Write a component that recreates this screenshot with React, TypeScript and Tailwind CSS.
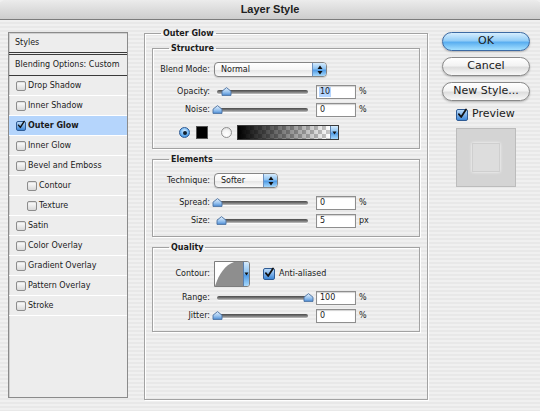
import React from "react";

function Check({ checked = false, big = false }: { checked?: boolean; big?: boolean }) {
  const size = big ? "w-[12px] h-[12px]" : "w-[10px] h-[10px]";
  if (!checked) {
    return (
      <div
        className={`${size} shrink-0 rounded-[2px] border border-[#8d8d8d] bg-gradient-to-b from-white to-[#d9d9d9] shadow-[inset_0_1px_1px_rgba(0,0,0,0.12)]`}
      />
    );
  }
  return (
    <div
      className={`${size} relative shrink-0 rounded-[2px] border border-[#2f5b94] bg-gradient-to-b from-[#b8d9f8] to-[#3c87d8]`}
    >
      <svg viewBox="0 0 12 12" className="absolute left-[0px] top-[-2px] w-full h-[calc(100%+2px)] overflow-visible">
        <path d="M2.2 6.2 L5 9.6 L10.8 0.6" fill="none" stroke="#111" strokeWidth="2.1" strokeLinejoin="round" strokeLinecap="round" />
      </svg>
    </div>
  );
}

function Radio({ on = false }: { on?: boolean }) {
  if (on) {
    return (
      <div className="w-[11px] h-[11px] shrink-0 rounded-full border border-[#2d5a94] bg-[radial-gradient(circle_at_50%_35%,#d9eeff_0%,#6cb3f2_55%,#2f7fd4_100%)] flex items-center justify-center">
        <div className="w-[4px] h-[4px] rounded-full bg-[#102030]" />
      </div>
    );
  }
  return (
    <div className="w-[11px] h-[11px] shrink-0 rounded-full border border-[#8f8f8f] bg-[radial-gradient(circle_at_50%_70%,#ffffff_0%,#f4f4f4_50%,#d2d2d2_100%)]" />
  );
}

function Slider({ pct }: { pct: number }) {
  const left = 3 + (pct / 100) * 91 - 5.5;
  return (
    <div className="relative w-[97px] h-[14px] flex items-center shrink-0">
      <div className="mx-[3px] flex-1 h-[4px] rounded-full bg-gradient-to-b from-[#4b4b4b] via-[#777777] to-[#c4c4c4] shadow-[0_1px_0_rgba(255,255,255,0.8)]" />
      <svg
        viewBox="0 0 11 9"
        className="absolute top-[2px] w-[11px] h-[9px]"
        style={{ left: `${left}px` }}
      >
        <defs>
          <linearGradient id={`tg${pct}`} x1="0" y1="0" x2="0" y2="1">
            <stop offset="0" stopColor="#e4f0fd" />
            <stop offset="0.55" stopColor="#9cc5ef" />
            <stop offset="1" stopColor="#4f90d8" />
          </linearGradient>
        </defs>
        <path d="M1 4.2 L5.5 0.6 L10 4.2 L10 8.4 L1 8.4 Z" fill={`url(#tg${pct})`} stroke="#4a6f9f" strokeWidth="0.9" strokeLinejoin="round" />
      </svg>
    </div>
  );
}

function NumInput({ value, selected = false }: { value: string; selected?: boolean }) {
  return (
    <div className="ml-[5px] w-[40px] h-[14px] shrink-0 border border-[#8e8e8e] bg-white shadow-[inset_0_1px_1px_rgba(0,0,0,0.18)] flex items-center pl-[2px]">
      <span className={selected ? "bg-[#b5d5ff] px-[1px] leading-[10px]" : "px-[1px] leading-[10px]"}>{value}</span>
    </div>
  );
}

function Arrows() {
  return (
    <svg viewBox="0 0 6 10" className="w-[6px] h-[10px]">
      <path d="M3 0.5 L5.5 4 L0.5 4 Z" fill="#111" />
      <path d="M3 9.5 L5.5 6 L0.5 6 Z" fill="#111" />
    </svg>
  );
}

function Down() {
  return (
    <svg viewBox="0 0 6 5" className="w-[5px] h-[4px]">
      <path d="M0.5 0.5 L5.5 0.5 L3 4.5 Z" fill="#111" />
    </svg>
  );
}

function Popup({ label, wide }: { label: string; wide: boolean }) {
  return (
    <div
      className={`${wide ? "w-[113px]" : "w-[64px]"} ml-[4px] h-[15px] shrink-0 flex rounded-[4px] border border-[#858585] overflow-hidden bg-[linear-gradient(180deg,#ffffff_0%,#f6f6f6_50%,#e6e6e6_55%,#fbfbfb_100%)] shadow-[0_1px_1px_rgba(0,0,0,0.15)]`}
    >
      <div className="flex-1 flex items-center pl-[6px]">{label}</div>
      <div className="w-[14px] border-l border-[#6b8fbf] flex items-center justify-center bg-[linear-gradient(180deg,#d6ebfc_0%,#8cc3f3_45%,#4f9be6_55%,#a6d8fb_100%)]">
        <Arrows />
      </div>
    </div>
  );
}

function Group({ title, children }: { title: string; children: React.ReactNode }) {
  return (
    <fieldset className="mx-[7px] border border-[#a2a2a2] shadow-[1px_1px_0_#ffffff,inset_1px_1px_0_#ffffff]">
      <legend className="ml-[16px] px-[2px] font-bold leading-[11px] text-[8px]">{title}</legend>
      <div className="flex flex-col pt-[8px] pb-[8px]">{children}</div>
    </fieldset>
  );
}

function Label({ text }: { text: string }) {
  return <div className="w-[57px] shrink-0 text-right">{text}</div>;
}

function SliderRow({ label, pct, value, unit, selected = false, top }: { label: string; pct: number; value: string; unit: string; selected?: boolean; top: string }) {
  return (
    <div className={`${top} h-[14px] flex items-center`}>
      <Label text={label} />
      <div className="ml-[4px]" />
      <Slider pct={pct} />
      <NumInput value={value} selected={selected} />
      <div className="ml-[3px]">{unit}</div>
    </div>
  );
}

const items: { name: string; indent?: boolean; on?: boolean }[] = [
  { name: "Drop Shadow" },
  { name: "Inner Shadow" },
  { name: "Outer Glow", on: true },
  { name: "Inner Glow" },
  { name: "Bevel and Emboss" },
  { name: "Contour", indent: true },
  { name: "Texture", indent: true },
  { name: "Satin" },
  { name: "Color Overlay" },
  { name: "Gradient Overlay" },
  { name: "Pattern Overlay" },
  { name: "Stroke" },
];

function Button({ label, primary = false, top }: { label: string; primary?: boolean; top: string }) {
  return (
    <div
      className={`${top} w-[88px] h-[19px] rounded-full flex items-center justify-center text-[11px] shadow-[0_1px_2px_rgba(0,0,0,0.25)] ${
        primary
          ? "border border-[#3c6aa3] bg-[linear-gradient(180deg,#d6eefe_0%,#93cdf7_45%,#5aaef0_55%,#a4e0ff_100%)]"
          : "border border-[#888888] bg-[linear-gradient(180deg,#ffffff_0%,#f3f3f3_45%,#dedede_55%,#f8f8f8_100%)]"
      }`}
    >
      {label}
    </div>
  );
}

export default function App() {
  return (
    <div className="w-[540px] h-[411px] overflow-hidden flex flex-col text-[8px] text-[#1a1a1a] font-['DejaVu_Sans',sans-serif] bg-[repeating-linear-gradient(180deg,#f0f0f0_0px,#f0f0f0_2px,#e8e8e8_2px,#e8e8e8_4px)]">
      {/* title bar */}
      <div className="h-[20px] shrink-0 flex items-center justify-center border-b border-[#7c7c7c] bg-gradient-to-b from-[#ececec] to-[#cdcdcd] rounded-t-[5px]">
        <span className="font-['Liberation_Sans',Arial,sans-serif] font-bold text-[11px] text-[#202020]">Layer Style</span>
      </div>

      <div className="flex items-start pl-[8px] pt-[8px]">
        {/* left list */}
        <div className="mt-[4px] w-[120px] h-[366px] shrink-0 border border-[#8b8b8b] bg-[#ededed] flex flex-col shadow-[inset_1px_1px_0_#cfcfcf]">
          <div className="h-[22px] flex items-center pl-[6px] border-b-[3px] border-double border-[#3a3a3a]">Styles</div>
          <div className="h-[21px] flex items-center pl-[6px] border-b border-[#3a3a3a]">Blending Options: Custom</div>
          {items.map((it) => (
            <div
              key={it.name}
              className={`h-[20px] flex items-center gap-[2px] border-b border-white ${it.indent ? "pl-[18px]" : "pl-[7px]"} ${
                it.on ? "bg-[#b5d5fc] font-bold" : ""
              }`}
            >
              <Check checked={!!it.on} />
              <span>{it.name}</span>
            </div>
          ))}
        </div>

        {/* main panel */}
        <fieldset className="ml-[16px] w-[284px] h-[372px] shrink-0 border border-[#a2a2a2] shadow-[1px_1px_0_#ffffff,inset_1px_1px_0_#ffffff]">
          <legend className="ml-[16px] px-[2px] font-bold leading-[11px] text-[8px]">Outer Glow</legend>
          <div className="flex flex-col gap-[5px] pt-[4px]">
            <Group title="Structure">
              <div className="h-[15px] flex items-center">
                <Label text="Blend Mode:" />
                <Popup label="Normal" wide={true} />
              </div>
              <SliderRow top="mt-[8px]" label="Opacity:" pct={10} value="10" unit="%" selected={true} />
              <SliderRow top="mt-[4px]" label="Noise:" pct={0} value="0" unit="%" />
              <div className="mt-[8px] h-[15px] flex items-center">
                <div className="ml-[26px]" />
                <Radio on={true} />
                <div className="ml-[6px] w-[12px] h-[13px] bg-black border border-[#555]" />
                <div className="ml-[13px]" />
                <Radio />
                <div className="ml-[5px] w-[102px] h-[15px] flex border border-[#3a3a3a]">
                  <div className="flex-1 bg-[linear-gradient(90deg,#000000_0%,rgba(0,0,0,0)_100%),repeating-conic-gradient(#c8c8c8_0%_25%,#ffffff_0%_50%)] [background-size:100%_100%,8px_8px]" />
                  <div className="w-[8px] border-l border-[#5a7fae] flex items-center justify-center bg-[linear-gradient(180deg,#d6ebfc_0%,#8cc3f3_45%,#4f9be6_55%,#a6d8fb_100%)]">
                    <Down />
                  </div>
                </div>
              </div>
            </Group>

            <Group title="Elements">
              <div className="h-[15px] flex items-center">
                <Label text="Technique:" />
                <Popup label="Softer" wide={false} />
              </div>
              <SliderRow top="mt-[8px]" label="Spread:" pct={0} value="0" unit="%" />
              <SliderRow top="mt-[4px]" label="Size:" pct={5} value="5" unit="px" />
            </Group>

            <Group title="Quality">
              <div className="h-[26px] flex items-center">
                <Label text="Contour:" />
                <div className="ml-[4px] w-[36px] h-[26px] flex border border-[#7d7d7d] rounded-r-[3px] overflow-hidden bg-white">
                  <svg viewBox="0 0 28 24" preserveAspectRatio="none" className="w-[28px] h-full">
                    <path d="M0 24 C 4 12, 10 3, 19 0 L 28 0 L 28 24 Z" fill="#8e8e8e" />
                  </svg>
                  <div className="flex-1 border-l border-[#5a7fae] flex items-center justify-center bg-[linear-gradient(180deg,#d6ebfc_0%,#8cc3f3_45%,#4f9be6_55%,#a6d8fb_100%)]">
                    <Down />
                  </div>
                </div>
                <div className="ml-[13px]" />
                <Check checked={true} big={true} />
                <span className="ml-[4px]">Anti-aliased</span>
              </div>
              <SliderRow top="mt-[4px]" label="Range:" pct={100} value="100" unit="%" />
              <SliderRow top="mt-[4px]" label="Jitter:" pct={0} value="0" unit="%" />
            </Group>
          </div>
        </fieldset>

        {/* right column */}
        <div className="ml-[14px] mt-[4px] w-[88px] shrink-0 flex flex-col font-['DejaVu_Sans',sans-serif]">
          <Button label="OK" primary={true} top="" />
          <Button label="Cancel" top="mt-[6px]" />
          <Button label="New Style..." top="mt-[6px]" />
          <div className="mt-[7px] ml-[14px] h-[13px] flex items-center gap-[4px] text-[11px]">
            <Check checked={true} big={true} />
            <span>Preview</span>
          </div>
          <div className="mt-[7px] ml-[14px] w-[60px] h-[59px] border border-[#bcbcbc] bg-[#d4d4d4] flex items-center justify-center">
            <div className="w-[28px] h-[29px] bg-[#dddddd] border border-[#cfcfcf] shadow-[0_0_3px_rgba(255,255,255,0.9)]" />
          </div>
        </div>
      </div>
    </div>
  );
}
